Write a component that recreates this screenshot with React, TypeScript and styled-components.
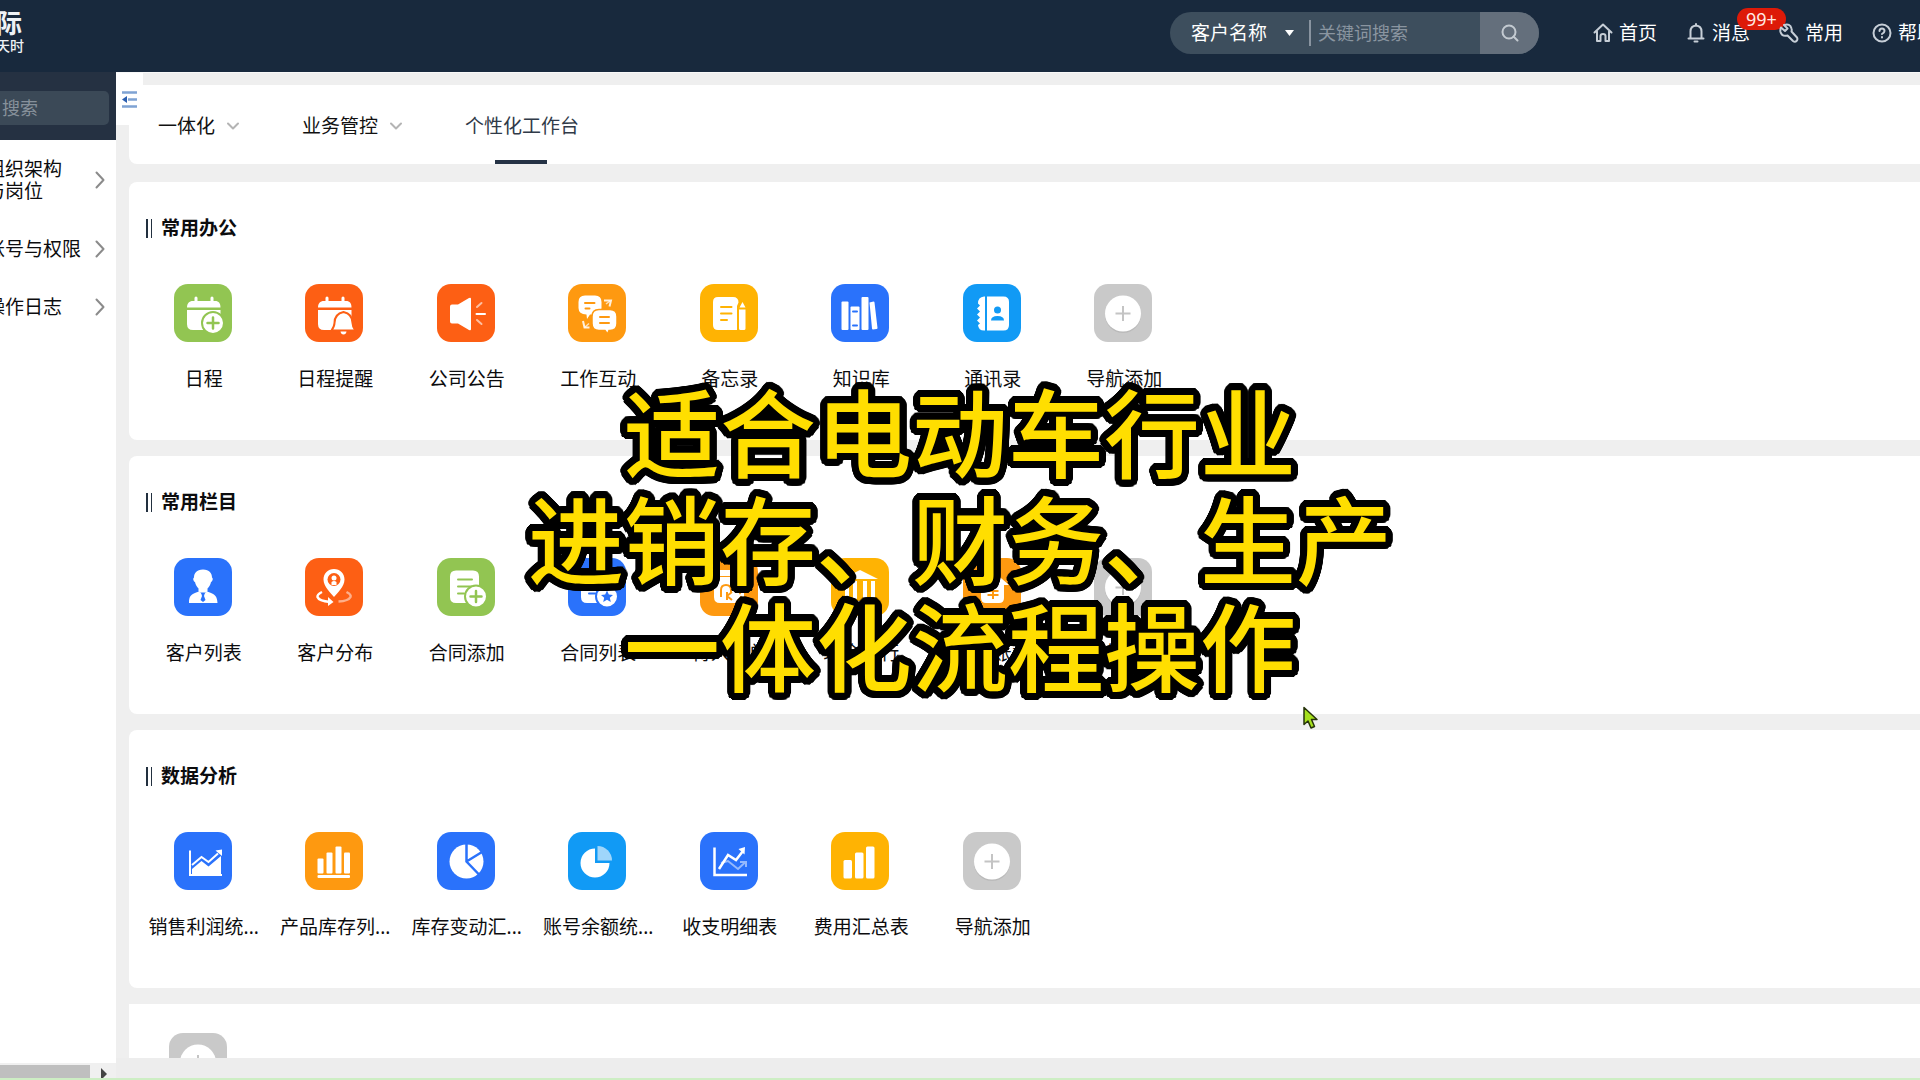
import React from 'react';
import styled, { createGlobalStyle } from 'styled-components';

const GlobalStyle = createGlobalStyle`
  *, *::before, *::after { box-sizing: border-box; }
  body {
    margin: 0;
    background: #efefef;
    color: #0c0c0e;
    font-family: "Noto Sans", "Noto Sans CJK SC", sans-serif;
    font-size: 19px;
    line-height: 22px;
  }
  button, input, select { font: inherit; color: inherit; border: 0; background: none; padding: 0; margin: 0; }
  button { cursor: pointer; }
  a { color: inherit; text-decoration: none; }
  svg { display: block; flex: none; }
`;

const Page = styled.div`
  position: relative;
  display: flex;
  flex-direction: column;
  height: 100vh;
  overflow: hidden;
`;

/* ---------- header ---------- */

const Header = styled.header`
  display: flex;
  align-items: flex-start;
  flex: none;
  height: 72px;
  background: #18293d;
  color: #fff;
  overflow: hidden;
`;

const Logo = styled.div`
  display: flex;
  flex-direction: column;
  margin-left: -4px;
  padding-top: 8px;
  color: #eef2f6;
`;

const LogoName = styled.strong`
  font-size: 26px;
  line-height: 30px;
`;

const LogoSlogan = styled.span`
  font-size: 14px;
  line-height: 15px;
  font-weight: 500;
`;

const SearchPill = styled.form`
  display: flex;
  align-items: center;
  width: 369px;
  height: 42px;
  margin: 12px 54px 0 auto;
  border-radius: 21px;
  background: #3d4e5d;
  overflow: hidden;
`;

const FieldPicker = styled.label`
  display: flex;
  align-items: center;
  gap: 8px;
  padding: 0 15px 0 21px;
`;

const FieldSelect = styled.select`
  appearance: none;
  width: 86px;
  outline: 0;
`;

const SearchInput = styled.input`
  flex: 1;
  min-width: 0;
  height: 26px;
  padding-left: 7px;
  border-left: 2px solid #8994a0;
  font-size: 18px;
  outline: 0;
  &::placeholder { color: #8a95a0; opacity: 1; }
`;

const SearchButton = styled.button`
  display: grid;
  place-items: center;
  width: 59px;
  height: 42px;
  background: #646f7c;
  color: #c3cad1;
`;

const HeaderNav = styled.nav`
  display: flex;
  gap: 28px;
  margin: 22px -17px 0 0;
`;

const HeaderLink = styled.a`
  position: relative;
  display: flex;
  align-items: center;
  gap: 6px;
  width: 65px;
  color: #fff;
  white-space: nowrap;
  svg { color: #c6ced7; }
`;

const Badge = styled.span`
  position: absolute;
  top: -14px;
  left: 51px;
  padding: 0 9px;
  border-radius: 11px;
  background: #dd1a08;
  color: #ffe9e4;
  font-size: 18px;
  line-height: 22px;
`;

/* ---------- body ---------- */

const Body = styled.div`
  display: grid;
  grid-template-columns: 116px minmax(0, 1fr);
  flex: 1;
  min-height: 0;
`;

const Sidebar = styled.aside`
  display: flex;
  flex-direction: column;
  background: #fff;
  overflow: hidden;
`;

const SideSearch = styled.div`
  padding: 19px 7px 15px 0;
  background: #253142;
`;

const SideInput = styled.input`
  width: 100%;
  height: 34px;
  padding-left: 2px;
  border-radius: 0 5px 5px 0;
  background: #3b4957;
  font-size: 18px;
  outline: 0;
  &::placeholder { color: #87919b; opacity: 1; }
`;

const SideNav = styled.nav`
  flex: 1;
  margin-left: -14px;
`;

const SideLink = styled.a`
  display: flex;
  align-items: center;
  justify-content: space-between;
  padding: 18px 11px 18px 0;
  svg { color: #8b8b8b; }
`;

const SideLabel = styled.span<{ $wrap?: boolean }>`
  width: ${(p) => (p.$wrap ? '80px' : 'auto')};
  white-space: ${(p) => (p.$wrap ? 'normal' : 'nowrap')};
`;

const ScrollTrack = styled.div`
  display: flex;
  align-items: flex-end;
  gap: 11px;
  height: 17px;
  background: #f0f0f0;
`;

const ScrollThumb = styled.div`
  width: 90px;
  height: 15px;
  background: #bfbfbf;
`;

const Main = styled.main`
  position: relative;
  display: flex;
  flex-direction: column;
  padding: 12px 0 0 13px;
  border-top: 1px solid #f8f8f8;
  background: #efefef;
  overflow: hidden;
`;

const CollapseButton = styled.button`
  position: absolute;
  top: 0;
  left: 0;
  display: grid;
  place-items: center;
  width: 27px;
  height: 52px;
  background: #fff;
`;

const Tabs = styled.nav`
  display: flex;
  flex: none;
  gap: 63px;
  height: 79px;
  margin-bottom: 18px;
  padding-left: 29px;
  border-radius: 0 0 0 8px;
  background: #fff;
`;

const Tab = styled.button<{ $active?: boolean }>`
  position: relative;
  display: flex;
  align-items: center;
  gap: 12px;
  padding-top: 2px;
  color: ${(p) => (p.$active ? '#303a48' : '#111')};
  svg { color: #b4b4b4; }
  &::after {
    content: "";
    display: ${(p) => (p.$active ? 'block' : 'none')};
    position: absolute;
    left: calc(50% - 27px);
    bottom: 0;
    width: 52px;
    height: 4px;
    background: #253245;
  }
`;

const Panels = styled.div`
  display: flex;
  flex-direction: column;
  flex: 1;
  gap: 16px;
  min-height: 0;
  overflow: hidden;
`;

const Panel = styled.section`
  flex: none;
  padding: 35px 0 50px;
  border-radius: 8px 0 0 8px;
  background: #fff;
`;

const PanelTitle = styled.h2`
  display: flex;
  align-items: center;
  gap: 9px;
  margin: 0 0 45px;
  padding-left: 17px;
  font-size: 19px;
  line-height: 22px;
  font-weight: 700;
  &::before {
    content: "";
    width: 6px;
    height: 19px;
    border: solid #22303f;
    border-width: 0 1px 0 2px;
  }
`;

const TileGrid = styled.div`
  display: grid;
  grid-template-columns: repeat(8, minmax(0, 1fr));
  width: 1052px;
  max-width: 100%;
  margin-left: 8px;
`;

const Tile = styled.button`
  display: flex;
  flex-direction: column;
  align-items: center;
  gap: 26px;
  white-space: nowrap;
`;

const TileLabel = styled.span`
  padding-left: 2px;
`;

const PartialPanel = styled.section`
  flex: 1;
  min-height: 0;
  padding: 29px 0 0 40px;
  background: #fff;
  overflow: hidden;
`;

const Footer = styled.div`
  height: 22px;
  flex: none;
  margin-left: -13px;
  background: #ededed;
`;

const GreenLine = styled.div`
  position: absolute;
  left: 0;
  right: 0;
  bottom: 0;
  height: 2px;
  background: #cdeec4;
`;

/* A ring of hard shadows gives the caption an outline with round corners. */
const outline = (radius: number, steps: number) =>
  Array.from({ length: steps }, (_, i) => {
    const a = (i / steps) * Math.PI * 2;
    return `${(Math.cos(a) * radius).toFixed(1)}px ${(Math.sin(a) * radius).toFixed(1)}px 0 #000`;
  }).join(', ');

const Caption = styled.p`
  position: absolute;
  top: 375px;
  left: 0;
  right: 0;
  margin: 0;
  color: #ffde00;
  font-family: "Noto Sans CJK SC", sans-serif;
  font-size: 96px;
  font-weight: 500;
  line-height: 107px;
  text-align: center;
  white-space: pre-line;
  pointer-events: none;
  text-shadow: ${outline(7, 36)}, ${outline(4, 16)};
`;

const Pointer = styled.svg`
  position: absolute;
  left: 1302px;
  top: 706px;
`;

/* ---------- icons ---------- */

const BLUE = '#2a72fb';
const SKY = '#119af5';
const GREEN = '#92c552';
const RED = '#fd5f14';
const ORANGE = '#fe9910';
const AMBER = '#ffb303';
const GREY = '#c9c9c9';

type Glyph = { bg: string; art: (bg: string) => React.ReactNode };

const calendar = (
  <>
    <path d="M13 23.500c0-4 2-6.500 6-6.500h1.500v-3a1.500 1.500 0 0 1 3 0v3h13v-3a1.500 1.500 0 0 1 3 0v3H41c4 0 5.500 2.500 5.500 6.500z" />
    <path d="M13 26h33.500v14q0 6-6 6H19q-6 0-6-6z" />
  </>
);

const doc = (bg: string) => (
  <>
    <path d="M19 12.500h17q6 0 6 6V29l-9 16H19q-6 0-6-6V18.500q0-6 6-6z" />
    <path d="M21 21.500h14M21 28.500h14M21 35.500h6" stroke={bg} strokeWidth="2" strokeLinecap="round" />
  </>
);

const glyphs: Record<string, Glyph> = {
  schedule: {
    bg: GREEN,
    art: (bg) => (
      <>
        {calendar}
        <circle cx="39" cy="39" r="11" stroke={bg} strokeWidth="2" />
        <path d="M33.500 39h11M39 33.500v11" stroke={bg} strokeWidth="2.500" strokeLinecap="round" />
      </>
    ),
  },
  remind: {
    bg: RED,
    art: (bg) => (
      <>
        {calendar}
        <path d="M38.500 28c-7 1.500-9 6-9 11 0 3-1 4.500-3 7.500h24c-2.500-3-3-4.500-3-7.500 0-5-2-9.500-9-11z" stroke={bg} strokeWidth="2" />
        <path d="M35.500 47.500h6q-.5 3-3 3t-3-3z" />
      </>
    ),
  },
  notice: {
    bg: RED,
    art: () => (
      <>
        <path d="M15 20.500h6L32 14q2-1 2 1v30q0 2-2 1L21 39.500h-6q-2 0-2-2v-15q0-2 2-2z" />
        <path d="M39.500 30h8.500" stroke="#fff" strokeWidth="2" strokeLinecap="round" />
        <path d="M40 23l4.500-4M40 36l4.500 4" stroke="#fff" strokeOpacity=".6" strokeWidth="2" strokeLinecap="round" />
      </>
    ),
  },
  chat: {
    bg: ORANGE,
    art: (bg) => (
      <>
        <path d="M17 11.500h10q6.500 0 6.500 6.500v6q0 6.500-6.500 6.500h-5L19 35l-.5-4.500q-8-.5-8-6.500v-6q0-6.500 6.500-6.500z" />
        <path d="M31 25.500h11q7 0 7 7v7q0 7-7 7h-1L39.500 50 37 46.500h-6q-7 0-7-7v-7q0-7 7-7z" stroke={bg} strokeWidth="1.500" />
        <path d="M17 19h9.500M17.500 24.500h4M32 33h9M32 39h9" stroke={bg} strokeWidth="2" strokeLinecap="round" />
        <path d="M36 16.500h7l-1.500 6M15 37l1.500 6.500h5" fill="none" stroke="#fff" strokeOpacity=".85" strokeWidth="2" />
        <path d="M42 17l-4 3M16.500 43.500l4.500-4" stroke="#fff" strokeOpacity=".7" strokeWidth="1.500" />
      </>
    ),
  },
  memo: {
    bg: AMBER,
    art: (bg) => (
      <>
        <path d="M18 13h15q5.500 0 5.500 5.500L37 22v24H18q-5 0-5-5V18q0-5 5-5z" />
        <path d="M39.500 23.500L42.500 18l3 5.500zM39 25.500h6.500v19q0 1.500-1.500 1.500h-3.500Q39 46 39 44.500z" />
        <path d="M21 23h10.500M21 29.500h10.500M21 36h6" stroke={bg} strokeWidth="2" strokeLinecap="round" />
      </>
    ),
  },
  books: {
    bg: BLUE,
    art: (bg) => (
      <>
        <rect x="10.500" y="17.500" width="7" height="28.500" rx="1" />
        <rect x="19.500" y="22.500" width="9" height="23.500" rx="1" />
        <path d="M22 27.500h4M22 41.500h4" stroke={bg} strokeWidth="2" strokeLinecap="round" />
        <rect x="30.500" y="13" width="7" height="33" rx="1" />
        <path d="M38.500 18.500l4-1q1 0 1 1L46.500 44q0 1-1 1l-3.500.5q-1 0-1-1z" />
      </>
    ),
  },
  contacts: {
    bg: SKY,
    art: (bg) => (
      <>
        <path d="M22 12.500v34h-1q-5.500 0-6-5.500l2-1.500-3-3 3-3-3-3 3-3-3-3 3-3-2-2q0-6.500 6-7z" />
        <path d="M24 12.500h16.500q5.500 0 5.500 5.500v23q0 5.500-5.500 5.500H24z" />
        <circle cx="34.500" cy="26" r="3.500" fill={bg} />
        <path d="M28 36.500q0-4.500 6.500-4.500t6.500 4.500z" fill={bg} />
      </>
    ),
  },
  add: {
    bg: GREY,
    art: () => (
      <>
        <circle cx="29" cy="31" r="18" fill="#000" fillOpacity=".07" />
        <circle cx="29" cy="29.500" r="18" />
        <path d="M21.500 29.500h15M29 22v15" stroke="#c4c4c4" strokeWidth="2" />
      </>
    ),
  },
  customer: {
    bg: BLUE,
    art: (bg) => (
      <>
        <path d="M29 11.500c6.500 0 9 4 9 8 1.500 1 .5 4-1 4.500-.5 3-2 5-3.500 6.500v3L29 36l-4.500-2.500v-3C23 29 21.500 27 21 24c-1.500-.5-2.500-3.500-1-4.500 0-4 2.500-8 9-8z" />
        <path d="M15 45c0-7 1.500-8.500 10-11.500l4 3.500 4-3.500C41.500 36.500 43 38 43.500 45z" />
        <path d="M27 34.500h4l-1 3.500 1.500 4-2.500 2-2.500-2L28 38z" fill={bg} />
      </>
    ),
  },
  map: {
    bg: RED,
    art: (bg) => (
      <>
        <path d="M29 11c6 0 10.500 4.500 10.500 10.500C39.500 29 32 35 29 39c-3-4-10.500-10-10.500-17.500C18.500 15.500 23 11 29 11z" />
        <circle cx="29" cy="21.500" r="6.500" fill={bg} />
        <circle cx="29" cy="20" r="2.500" />
        <path d="M26.500 27v-3q2.500-2 5 0v3z" />
        <path d="M17 34q-5 2.500-4.500 5 1.500 4 12.500 5" fill="none" stroke="#fff" strokeWidth="2.500" />
        <path d="M23 39l5.500 5-5.500 4z" />
        <path d="M41.500 34q5 2.500 4 5-2 4-12 4.500" fill="none" stroke="#fff" strokeOpacity=".5" strokeWidth="2.500" />
      </>
    ),
  },
  contractAdd: {
    bg: GREEN,
    art: (bg) => (
      <>
        {doc(bg)}
        <circle cx="39" cy="38.500" r="11" stroke={bg} strokeWidth="2" />
        <path d="M33.500 38.500h11M39 33v11" stroke={bg} strokeWidth="2.500" strokeLinecap="round" />
      </>
    ),
  },
  contractList: {
    bg: BLUE,
    art: (bg) => (
      <>
        {doc(bg)}
        <circle cx="39" cy="38.500" r="11" stroke={bg} strokeWidth="2" />
        <path d="M39 32.500l1.800 4 4.200.4-3.200 2.900 1 4.200-3.800-2.200-3.800 2.200 1-4.200-3.200-2.900 4.200-.4z" fill={bg} />
      </>
    ),
  },
  inbound: {
    bg: ORANGE,
    art: (bg) => (
      <>
        <path d="M20 12h20q4 0 4 6H20z" />
        <path d="M19 19h21l4 6v20H20q-6 0-6-6V24q0-5 5-5z" />
        <path d="M21 39v-7q0-5 5-5t5 5v2M27 34v8M27 38l5-4M27 38l5 4" fill="none" stroke={bg} strokeWidth="2" />
        <path d="M36 29l4 6 5-7M36 45l5-6 5 6" fill="none" stroke={bg} strokeWidth="2" />
      </>
    ),
  },
  bank: {
    bg: AMBER,
    art: () => (
      <>
        <path d="M29 12l18 9H11z" />
        <path d="M14 23h4v18h-4zM22 23h4v18h-4zM32 23h4v18h-4zM40 23h4v18h-4zM12 43h34v3H12z" />
      </>
    ),
  },
  receivable: {
    bg: ORANGE,
    art: (bg) => (
      <>
        <path d="M31 14l15 13h-5v13q0 5-5 5H23q-5 0-5-5V27h-3z" />
        <path d="M25 25l5 6 5-6M24.500 33h11M24.500 37h11M30 31v10" fill="none" stroke={bg} strokeWidth="2" />
      </>
    ),
  },
  profit: {
    bg: BLUE,
    art: () => (
      <>
        <path d="M16 18.500V43h32" fill="none" stroke="#fff" strokeWidth="2" />
        <path d="M18 42v-5l9.500-8 7 5.500L47 24v18z" />
        <path d="M18 33l9.500-8 7 5L44 21.500" fill="none" stroke="#fff" strokeWidth="2" />
        <path d="M41.500 18.500l6.500-1v6.500z" />
      </>
    ),
  },
  stock: {
    bg: ORANGE,
    art: () => (
      <>
        <rect x="12.500" y="26.500" width="6" height="15" rx="1" />
        <rect x="21.500" y="20.500" width="6" height="21" rx="1" />
        <rect x="30.500" y="14.500" width="6" height="27" rx="1" />
        <rect x="39" y="20.500" width="6" height="21" rx="1" />
        <rect x="12.500" y="43" width="32.500" height="3" rx="1" />
      </>
    ),
  },
  change: {
    bg: BLUE,
    art: (bg) => (
      <>
        <circle cx="29.500" cy="29.500" r="17" />
        <path d="M29.500 11v18.500L42 42.500M29.500 29.500L45 20" fill="none" stroke={bg} strokeWidth="2.500" />
      </>
    ),
  },
  balance: {
    bg: SKY,
    art: () => (
      <>
        <path d="M27 16.500V31h14.500A14.500 14.500 0 1 1 27 16.500z" />
        <path d="M29.500 14A14.500 14.500 0 0 1 44 28.500H29.500z" fillOpacity=".6" />
      </>
    ),
  },
  flow: {
    bg: BLUE,
    art: () => (
      <>
        <path d="M14.500 15.500V43H47" fill="none" stroke="#fff" strokeWidth="2.500" />
        <path d="M21 31l7-2 10 8 7-6.500M40 30h6v5" fill="none" stroke="#fff" strokeOpacity=".5" strokeWidth="2" />
        <path d="M19 37l9-14 8 5 7-9" fill="none" stroke="#fff" strokeWidth="2.500" />
        <path d="M38.500 17l6.500-2-.5 7.500z" />
      </>
    ),
  },
  expense: {
    bg: AMBER,
    art: () => (
      <>
        <rect x="12.500" y="28" width="8.500" height="18.500" rx="1.500" />
        <rect x="24" y="20.500" width="8.500" height="26" rx="1.500" />
        <rect x="35" y="14.500" width="8.500" height="32" rx="1.500" />
      </>
    ),
  },
};

function TileIcon({ name }: { name: string }) {
  const g = glyphs[name];
  return (
    <svg width="58" height="58" viewBox="0 0 58 58" fill="#fff" aria-hidden="true">
      <rect width="58" height="58" rx="14" fill={g.bg} />
      {g.art(g.bg)}
    </svg>
  );
}

const line = { fill: 'none', stroke: 'currentColor', strokeWidth: 2, strokeLinecap: 'round', strokeLinejoin: 'round' } as const;

const HomeIcon = () => (
  <svg width="20" height="20" viewBox="0 0 20 20" {...line}>
    <path d="M1.500 9.500L10 1.500l8.500 8M4 8.500v9.500h3.500v-5q0-2 2.500-2t2.500 2v5H16V8.500" />
  </svg>
);
const BellIcon = () => (
  <svg width="20" height="20" viewBox="0 0 20 20" {...line}>
    <path d="M4.500 15V8.500q0-5.500 5.500-6 5.500.5 5.500 6V15M2.500 15.500h15M8.500 18.500h3M10 1v1" />
  </svg>
);
const WrenchIcon = () => (
  <svg width="20" height="20" viewBox="0 0 20 20" {...line}>
    <path d="M2 4.500l4 3.500 2.500-2.500L5 2q6-2 7.500 3.500.5 1.500 0 3L18 14.500q1 2-.5 3.500t-3.500 0L8.500 12.500Q3 14 1.500 9q-.5-2.500.5-4.500z" />
  </svg>
);
const HelpIcon = () => (
  <svg width="20" height="20" viewBox="0 0 20 20" {...line}>
    <circle cx="10" cy="10" r="8.500" />
    <path d="M7.500 8q0-2.500 2.500-2.500T12.500 8q0 1.500-2.500 3M10 14v.5" />
  </svg>
);
const SearchIcon = () => (
  <svg width="18" height="18" viewBox="0 0 18 18" {...line}>
    <circle cx="8" cy="8" r="6.500" />
    <path d="M12.500 12.500l4 4" />
  </svg>
);
const ChevronRight = () => (
  <svg width="10" height="18" viewBox="0 0 10 18" {...line}>
    <path d="M1.500 1.500L8.500 9l-7 7.500" />
  </svg>
);
const ChevronDown = () => (
  <svg width="12" height="8" viewBox="0 0 12 8" {...line}>
    <path d="M1 1.500l5 5 5-5" />
  </svg>
);

/* ---------- data ---------- */

const panels = [
  {
    title: '常用办公',
    tiles: [
      ['schedule', '日程'], ['remind', '日程提醒'], ['notice', '公司公告'], ['chat', '工作互动'],
      ['memo', '备忘录'], ['books', '知识库'], ['contacts', '通讯录'], ['add', '导航添加'],
    ],
  },
  {
    title: '常用栏目',
    tiles: [
      ['customer', '客户列表'], ['map', '客户分布'], ['contractAdd', '合同添加'], ['contractList', '合同列表'],
      ['inbound', '待入库单'], ['bank', '现金银行'], ['receivable', '应收账款'], ['add', '导航添加'],
    ],
  },
  {
    title: '数据分析',
    tiles: [
      ['profit', '销售利润统...'], ['stock', '产品库存列...'], ['change', '库存变动汇...'], ['balance', '账号余额统...'],
      ['flow', '收支明细表'], ['expense', '费用汇总表'], ['add', '导航添加'],
    ],
  },
];

export default function App() {
  return (
    <Page>
      <GlobalStyle />
      <Header>
        <Logo>
          <LogoName>际</LogoName>
          <LogoSlogan>天时</LogoSlogan>
        </Logo>
        <SearchPill onSubmit={(e) => e.preventDefault()}>
          <FieldPicker>
            <FieldSelect aria-label="搜索字段">
              <option>客户名称</option>
            </FieldSelect>
            <svg width="9" height="6" viewBox="0 0 9 6" fill="#fff" aria-hidden="true">
              <path d="M0 0h9L4.500 6z" />
            </svg>
          </FieldPicker>
          <SearchInput type="text" aria-label="关键词搜索" placeholder="关键词搜索" />
          <SearchButton type="submit" aria-label="搜索">
            <SearchIcon />
          </SearchButton>
        </SearchPill>
        <HeaderNav>
          <HeaderLink href="#home"><HomeIcon />首页</HeaderLink>
          <HeaderLink href="#messages"><BellIcon />消息<Badge>99+</Badge></HeaderLink>
          <HeaderLink href="#common"><WrenchIcon />常用</HeaderLink>
          <HeaderLink href="#help"><HelpIcon />帮助</HeaderLink>
        </HeaderNav>
      </Header>

      <Body>
        <Sidebar>
          <SideSearch>
            <SideInput type="text" aria-label="搜索" placeholder="搜索" />
          </SideSearch>
          <SideNav>
            <SideLink href="#org"><SideLabel $wrap>组织架构与岗位</SideLabel><ChevronRight /></SideLink>
            <SideLink href="#account"><SideLabel>账号与权限</SideLabel><ChevronRight /></SideLink>
            <SideLink href="#log"><SideLabel>操作日志</SideLabel><ChevronRight /></SideLink>
          </SideNav>
          <ScrollTrack>
            <ScrollThumb />
            <svg width="6" height="12" viewBox="0 0 6 12" fill="#444" aria-hidden="true">
              <path d="M0 0l6 6-6 6z" />
            </svg>
          </ScrollTrack>
        </Sidebar>

        <Main>
          <Tabs>
            <Tab type="button">一体化<ChevronDown /></Tab>
            <Tab type="button">业务管控<ChevronDown /></Tab>
            <Tab type="button" $active>个性化工作台</Tab>
          </Tabs>
          <CollapseButton type="button" aria-label="收起菜单">
            <svg width="15" height="17" viewBox="0 0 15 17" aria-hidden="true">
              <path d="M0 1.500h15M6 8.500h9M0 15.500h15" stroke="#7fa3d3" strokeWidth="2.500" />
              <path d="M5 5v7L0 8.500z" fill="#2c5fb0" />
            </svg>
          </CollapseButton>
          <Panels>
            {panels.map((panel) => (
              <Panel key={panel.title}>
                <PanelTitle>{panel.title}</PanelTitle>
                <TileGrid>
                  {panel.tiles.map(([icon, label]) => (
                    <Tile type="button" key={label}>
                      <TileIcon name={icon} />
                      <TileLabel>{label}</TileLabel>
                    </Tile>
                  ))}
                </TileGrid>
              </Panel>
            ))}
            <PartialPanel>
              <TileIcon name="add" />
            </PartialPanel>
          </Panels>
          <Footer />
        </Main>
      </Body>

      <GreenLine />
      <Caption>{'适合电动车行业\n进销存、财务、生产\n一体化流程操作'}</Caption>
      <Pointer width="18" height="24" viewBox="0 0 18 24" aria-hidden="true">
        <path d="M2 1.500v17l4-3.500 3 7 3.500-1.500-3-7H15z" fill="#a5e01c" stroke="#26330a" strokeWidth="1.500" strokeLinejoin="round" />
      </Pointer>
    </Page>
  );
}
